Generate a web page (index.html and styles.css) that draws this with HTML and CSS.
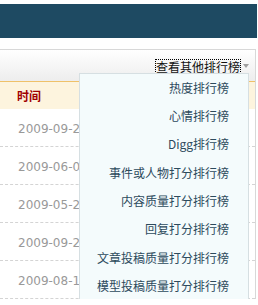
FILE: index.html
```html
<!DOCTYPE html>
<html lang="zh-CN">
<head>
    <meta charset="UTF-8">
    <title>排行榜</title>
    <link rel="stylesheet" href="styles.css">
</head>
<body>
    <div class="topbar"></div>
    <div class="board">
        <div class="board-head">
            <div class="more">
                <a href="#" class="more-link">查看其他排行榜</a>
                <span class="more-arrow"></span>
                <ul class="more-menu">
                    <li><a href="#">热度排行榜</a></li>
                    <li><a href="#">心情排行榜</a></li>
                    <li><a href="#">Digg排行榜</a></li>
                    <li><a href="#">事件或人物打分排行榜</a></li>
                    <li><a href="#">内容质量打分排行榜</a></li>
                    <li><a href="#">回复打分排行榜</a></li>
                    <li><a href="#">文章投稿质量打分排行榜</a></li>
                    <li><a href="#">模型投稿质量打分排行榜</a></li>
                </ul>
            </div>
        </div>
        <table class="rank">
            <thead>
                <tr><th>时间</th></tr>
            </thead>
            <tbody>
                <tr><td>2009-09-21</td></tr>
                <tr><td>2009-06-03</td></tr>
                <tr><td>2009-05-26</td></tr>
                <tr><td>2009-09-22</td></tr>
                <tr><td>2009-08-12</td></tr>
            </tbody>
        </table>
    </div>
</body>
</html>
```

FILE: styles.css
```css
body, html {
    margin: 0;
    padding: 0;
    font-family: "DejaVu Sans", Verdana, "Noto Sans CJK SC", sans-serif;
    font-size: 12px;
    background: #fff;
}

.topbar {
    margin-top: 4px;
    height: 34px;
    width: 257px;
    background-color: #1e4a62;
}

.board {
    margin-top: 11px;
    width: 255px;
    border-top: 1px solid #d8d8d8;
    border-right: 1px solid #d8d8d8;
}

.board-head {
    height: 31px;
    background: linear-gradient(#ffffff, #ededed);
    border-bottom: 1px solid #efc169;
    display: flex;
    justify-content: flex-end;
    align-items: center;
}

.more {
    position: relative;
    display: flex;
    align-items: center;
    margin-right: 6px;
    margin-top: 1px;
}

.more-link {
    font-family: "Noto Sans CJK SC", sans-serif;
    color: #111;
    text-decoration: none;
    line-height: 13px;
    outline: 1px dotted #000;
    outline-offset: 0;
}

.more-arrow {
    width: 0;
    height: 0;
    margin-left: 3px;
    border-left: 3px solid transparent;
    border-right: 3px solid transparent;
    border-top: 4px solid #a0a0a0;
}

.more-menu {
    position: absolute;
    top: 13px;
    right: 0;
    width: 168px;
    margin: 0;
    padding: 0 0 20px;
    list-style: none;
    background-color: #f4fbfc;
    border: 1px solid #d6dfe2;
    text-align: right;
    font-family: "Noto Sans CJK SC", sans-serif;
}

.more-menu li {
    display: block;
    height: 28.4px;
    line-height: 28px;
    padding-right: 19px;
}

.more-menu a {
    color: #2c4a5c;
    text-decoration: none;
}

.rank {
    width: 100%;
    border-collapse: collapse;
}

.rank th {
    height: 27px;
    padding: 0 0 0 17px;
    text-align: left;
    background-color: #fdf4de;
    color: #a10000;
    font-family: "Noto Sans CJK SC", sans-serif;
    font-weight: bold;
}

.rank td {
    height: 35px;
    padding: 2px 0 0 18px;
    color: #999;
    border-bottom: 1px dashed #d4d4d4;
}
```
